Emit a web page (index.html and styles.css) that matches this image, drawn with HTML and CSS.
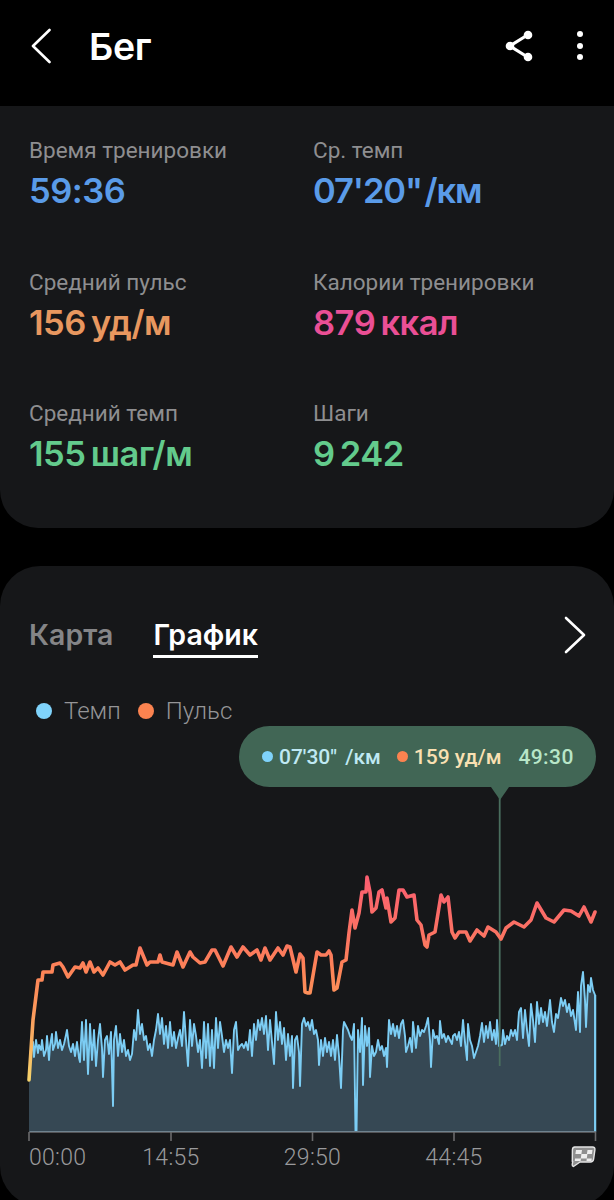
FILE: index.html
```html
<!DOCTYPE html>
<html lang="ru">
<head>
<meta charset="utf-8">
<title>Бег</title>
<link rel="stylesheet" href="styles.css">
</head>
<body>
<div class="screen">
  <header class="topbar">
    <svg class="back" width="20" height="36" viewBox="0 0 20 36"><path d="M18.5 2 2 18l16.500 16"/></svg>
    <h1 class="title">Бег</h1>
    <svg class="share" width="30" height="34" viewBox="0 0 30 34"><path class="share-line" d="M22.500 6 5 17l17.500 11"/><circle cx="23" cy="6" r="4.300"/><circle cx="5" cy="17" r="4.300"/><circle cx="23" cy="28" r="4.300"/></svg>
    <svg class="more" width="8" height="32" viewBox="0 0 8 32"><circle cx="4" cy="4" r="3"/><circle cx="4" cy="16" r="3"/><circle cx="4" cy="27" r="3"/></svg>
  </header>

  <section class="card stats">
    <div class="stat"><div class="stat-label">Время тренировки</div><div class="stat-value blue">59:36</div></div>
    <div class="stat"><div class="stat-label">Ср. темп</div><div class="stat-value blue tight">07'20" <span class="unit">/км</span></div></div>
    <div class="stat"><div class="stat-label">Средний пульс</div><div class="stat-value orange">156 <span class="unit">уд/м</span></div></div>
    <div class="stat"><div class="stat-label">Калории тренировки</div><div class="stat-value pink">879 <span class="unit">ккал</span></div></div>
    <div class="stat"><div class="stat-label">Средний темп</div><div class="stat-value green">155 <span class="unit">шаг/м</span></div></div>
    <div class="stat"><div class="stat-label">Шаги</div><div class="stat-value green">9 242</div></div>
  </section>

  <section class="card graph">
    <nav class="tabs">
      <span class="tab">Карта</span>
      <span class="tab tab-active">График</span>
      <svg class="next" width="22" height="38" viewBox="0 0 22 38"><path d="M2 2l18 17L2 36"/></svg>
    </nav>
    <div class="legend">
      <span class="legend-dot dot-blue"></span><span class="legend-text">Темп</span>
      <span class="legend-dot dot-orange"></span><span class="legend-text">Пульс</span>
    </div>
    <div class="plot">
      <div class="tip">
        <span class="tip-dot dot-blue"></span><span class="tip-pace">07'30" /км</span>
        <span class="tip-dot dot-orange tip-gap"></span><span class="tip-hr">159 уд/м</span>
        <span class="tip-time">49:30</span>
        <span class="tip-arrow"></span>
      </div>
      <svg class="chart" width="614" height="410" viewBox="0 790 614 410">
        <defs>
          <linearGradient id="hr" gradientUnits="userSpaceOnUse" x1="0" y1="1080" x2="0" y2="880">
            <stop offset="0" stop-color="#f6d36b"/>
            <stop offset="0.33" stop-color="#fb9a5c"/>
            <stop offset="0.55" stop-color="#fd8357"/>
            <stop offset="0.72" stop-color="#fb7462"/>
            <stop offset="1" stop-color="#fb5f70"/>
          </linearGradient>
          <clipPath id="inner"><rect x="29.900" y="790" width="570" height="342"/></clipPath>
          <path id="pace" d="M29 1132L29 1050 31 1052 33 1042 34 1057 35 1048 36 1040 38 1053 39 1045 41 1050 42 1040 44 1056 46 1050 47 1036 49 1060 50 1046 52 1034 53 1050 55 1044 56 1032 58 1048 60 1040 62 1050 64 1044 66 1035 67 1030 69 1046 71 1052 73 1044 75 1056 77 1042 79 1058 80 1062 82 1022 84 1060 86 1020 88 1074 90 1024 92 1060 94 1030 96 1066 98 1040 100 1024 102 1048 103 1077 105 1040 107 1036 109 1054 111 1032 113 1106 114 1040 116 1026 118 1056 120 1034 122 1052 124 1040 126 1056 128 1050 130 1060 132 1054 134 1030 136 1040 138 1010 140 1034 142 1024 144 1040 146 1036 148 1050 150 1044 152 1056 154 1040 156 1030 158 1014 160 1034 162 1018 164 1044 166 1026 168 1048 170 1022 172 1046 174 1032 176 1048 178 1038 180 1030 182 1046 184 1012 186 1040 188 1066 190 1020 192 1046 194 1024 196 1036 198 1052 200 1040 202 1068 204 1022 206 1058 208 1024 210 1066 212 1030 214 1068 216 1018 218 1048 220 1022 222 1036 224 1052 226 1040 228 1048 230 1040 232 1073 234 1030 236 1022 238 1050 240 1046 242 1044 244 1048 246 1042 248 1050 250 1030 252 1056 254 1024 256 1040 258 1020 260 1030 262 1018 264 1034 266 1016 268 1050 270 1020 274 1064 276 1012 278 1040 280 1022 282 1044 284 1028 286 1060 288 1034 290 1056 292 1036 293 1088 295 1040 297 1036 299 1052 300 1086 302 1024 304 1018 306 1026 308 1022 310 1030 312 1020 314 1034 316 1030 318 1040 319 1065 321 1040 323 1056 325 1038 327 1052 329 1042 331 1056 333 1040 335 1060 337 1035 339 1056 341 1088 343 1030 344 1022 346 1026 348 1030 350 1036 352 1040 354 1024 355.500 1132 356.500 1132 358 1030 360 1052 362 1018 363 1085 365 1026 367 1046 369 1028 370 1077 372 1046 374 1056 376 1052 378 1040 380 1050 382 1046 384 1056 386 1048 387 1067 389 1020 391 1034 393 1024 395 1036 397 1026 399 1038 401 1024 403 1020 405 1036 406 1052 408 1046 410 1038 412 1052 413 1022 416 1048 418 1026 420 1036 422 1030 424 1032 426 1026 428 1018 430 1040 431 1067 433 1030 435 1038 437 1036 439 1044 440 1021 442 1038 444 1034 446 1042 448 1036 450 1040 452 1044 453 1036 455 1034 457 1040 459 1032 461 1046 463 1020 465 1042 467 1060 468 1024 470 1040 472 1046 474 1058 476 1052 478 1046 480 1036 482 1023 484 1042 486 1026 488 1038 490 1022 492 1040 494 1030 496 1044 497 1020 499 1046 502 1045 503 1030 505 1044 507 1036 509 1040 511 1030 513 1036 515 1030 517 1040 519 1012 521 1008 523 1038 525 1010 527 1030 529 1046 531 1004 533 1020 535 1042 537 1002 539 1024 541 1008 543 1022 545 1012 547 1026 550 1000 552 1022 554 1032 556 1014 558 1018 561 998 563 1006 565 1000 567 1012 569 1004 571 1016 573 1010 576 1030 578 992 580 1032 581 986 583 972 585 1000 586 1027 588 985 590 992 591 978 593 990 595 995 595 1132Z"/>
        </defs>
        <use href="#pace" class="pace-area"/>
        <use href="#pace" class="pace-line" clip-path="url(#inner)"/>
        <path class="pace-edge" d="M595.500 995V1132"/>
        <path class="cursor" d="M499.700 795V1066"/>
        <path class="hr-line" d="M29 1080 31 1050 33 1020 38 980 42 980 43 972 52 972 53 965 60 963 63 967 68 977 75 967 80 968 83 963 86 972 90 962 94 972 98 968 103 975 110 962 115 965 120 962 125 970 133 965 136 965 140 948 147 965 150 962 158 962 160 955 162 962 173 965 177 952 183 967 190 952 193 957 200 963 205 962 212 950 215 950 223 966 231 947 237 957 243 947 250 955 257 950 261 960 265 948 270 960 278 948 283 955 287 946 290 947 296 972 300 954 303 958 305 992 308 993 310 993 317 952 321 955 326 955 329 951 331 955 334 990 337 988 342 962 346 960 349 933 352 910 355 928 359 913 362 892 366 892 367 877 370 892 372 912 376 908 379 892 382 890 386 908 387 898 391 922 395 918 399 890 403 890 407 897 414 895 417 920 421 925 425 945 427 947 429 935 435 932 441 895 444 902 448 897 452 932 455 938 459 932 466 932 470 941 477 930 484 936 488 927 496 932 501 939 506 928 514 922 524 927 531 920 537 903 546 918 554 922 564 910 571 911 579 916 584 907 591 922 595 912"/>
        <path class="axis" d="M29 1132H596M29 1132V1141M171 1132V1141M312.500 1132V1141M454 1132V1141M595.500 1132V1141"/>
        <text class="axis-label" x="29" y="1165">00:00</text>
        <text class="axis-label mid" x="171" y="1165">14:55</text>
        <text class="axis-label mid" x="312.500" y="1165">29:50</text>
        <text class="axis-label mid" x="454" y="1165">44:45</text>
        <g class="flag">
          <path class="flag-outline" d="M575 1147h17.500q2.800 0 2.400 2.800l-1.300 9.400q-.4 2.800-3.200 2.800h-10.400l-6.500 4.500q-1.500-.3-1.300-2l.5-3-.4 0 .1-11.700q.1-2.800 2.600-2.800z"/>
          <path class="flag-check" d="M576 1150h6l-.6 4h-6zM587.500 1150h5l-.6 4h-5zM581.400 1154h6l-.6 4.500h-6zM575 1158.500h6l-.4 2.500h-5.800zM586.800 1158.500h5l-.3 2.500h-5z"/>
        </g>
      </svg>
    </div>
  </section>
</div>
</body>
</html>
```
FILE: styles.css
```css
* { box-sizing: border-box; }
html, body { margin: 0; padding: 0; background: #000; }
.screen {
  width: 614px;
  height: 1200px;
  overflow: hidden;
  background: #000;
  font-family: "Roboto", "Liberation Sans", sans-serif;
}
.topbar {
  height: 106px;
  display: flex;
  align-items: center;
  padding: 0 30px 14px 31px;
  color: #fff;
}
.back path, .next path {
  fill: none;
  stroke: #fff;
  stroke-width: 2.6;
  stroke-linecap: round;
  stroke-linejoin: round;
}
.title {
  margin: 0 0 0 38px;
  font-family: "Inter", sans-serif;
  font-size: 37.5px;
  font-weight: 600;
  letter-spacing: -0.3px;
  flex: 1;
}
.share { fill: #fff; margin-right: 41px; }
.share-line { fill: none; stroke: #fff; stroke-width: 3.2; }
.more { fill: #fff; }

.card { background: #161719; }
.stats {
  height: 422px;
  border-radius: 0 0 38px 38px;
  padding: 27px 0 0 29px;
  display: grid;
  grid-template-columns: 284px 1fr;
  grid-auto-rows: 131.5px;
  align-content: start;
}
.stat-label {
  font-size: 22.5px;
  line-height: 34px;
  color: #8e8e90;
}
.stat-value {
  font-family: "Inter", sans-serif;
  font-size: 34.5px;
  font-weight: 600;
  line-height: 46px;
  margin-top: 1px;
  letter-spacing: -0.5px;
  word-spacing: -3px;
}
.tight { letter-spacing: -1.1px; word-spacing: -5px; }
.blue { color: #5a9be8; }
.orange { color: #e8975f; }
.pink { color: #ea4f95; }
.green { color: #63cb8c; }

.graph {
  margin-top: 38px;
  height: 640px;
  border-radius: 40px;
  padding-top: 50px;
  position: relative;
}
.tabs {
  display: flex;
  align-items: flex-start;
  padding: 0 28px 0 29px;
  height: 42px;
}
.tab {
  font-family: "Inter", sans-serif;
  font-size: 28.5px;
  font-weight: 600;
  line-height: 38px;
  color: #858587;
  margin-right: 40px;
}
.tab-active {
  color: #fff;
  border-bottom: 3px solid #fff;
  height: 42px;
}
.next { margin-left: auto; }
.legend {
  margin-top: 37px;
  padding-left: 36px;
  display: flex;
  align-items: center;
  height: 31px;
}
.legend-dot {
  width: 16px;
  height: 16px;
  border-radius: 50%;
}
.legend-text {
  font-size: 24px;
  font-weight: 300;
  color: #959597;
  margin: 0 17px 0 12px;
}
.dot-blue { background: #7fd3fb; }
.dot-orange { background: #fb8350; }

.plot { position: relative; padding-top: 64px; }
.tip {
  position: absolute;
  left: 239px;
  top: 0;
  width: 357px;
  height: 61px;
  border-radius: 31px;
  background: #416655;
  display: flex;
  align-items: center;
  padding-left: 23px;
  font-size: 21px;
  font-weight: 500;
  white-space: nowrap;
  z-index: 1;
}
.tip-dot { width: 11px; height: 11px; border-radius: 50%; flex: none; }
.tip-gap { margin-left: 16px; }
.tip-pace { color: #bfe9f3; margin-left: 6px; word-spacing: 3px; }
.tip-hr { color: #f9e0b2; margin-left: 6px; }
.tip-time { color: #b8e6c8; margin-left: 17px; letter-spacing: .4px; }
.tip-arrow {
  position: absolute;
  left: 252px;
  top: 61px;
  border-left: 9px solid transparent;
  border-right: 9px solid transparent;
  border-top: 13px solid #416655;
}
.chart { display: block; }
.pace-area { fill: #364854; }
.pace-line { fill: none; stroke: #7ccdf4; stroke-width: 1.9; stroke-linejoin: round; }
.pace-edge { stroke: #7ccdf4; stroke-width: 1.5; fill: none; }
.cursor { stroke: #4a6e5e; stroke-width: 1.8; fill: none; }
.hr-line { fill: none; stroke: url(#hr); stroke-width: 3.6; stroke-linejoin: round; stroke-linecap: round; }
.axis { stroke: #6a6a6c; stroke-width: 1.600; fill: none; }
.axis-label {
  font-family: "Roboto", "Liberation Sans", sans-serif;
  font-size: 23px;
  font-weight: 300;
  letter-spacing: .3px;
  fill: #9a9a9c;
}
.mid { text-anchor: middle; }
.flag-outline { fill: #8f8f8f; stroke: #e4e4e4; stroke-width: 1.4; stroke-linejoin: round; }
.flag-check { fill: #eeeeee; }
```
